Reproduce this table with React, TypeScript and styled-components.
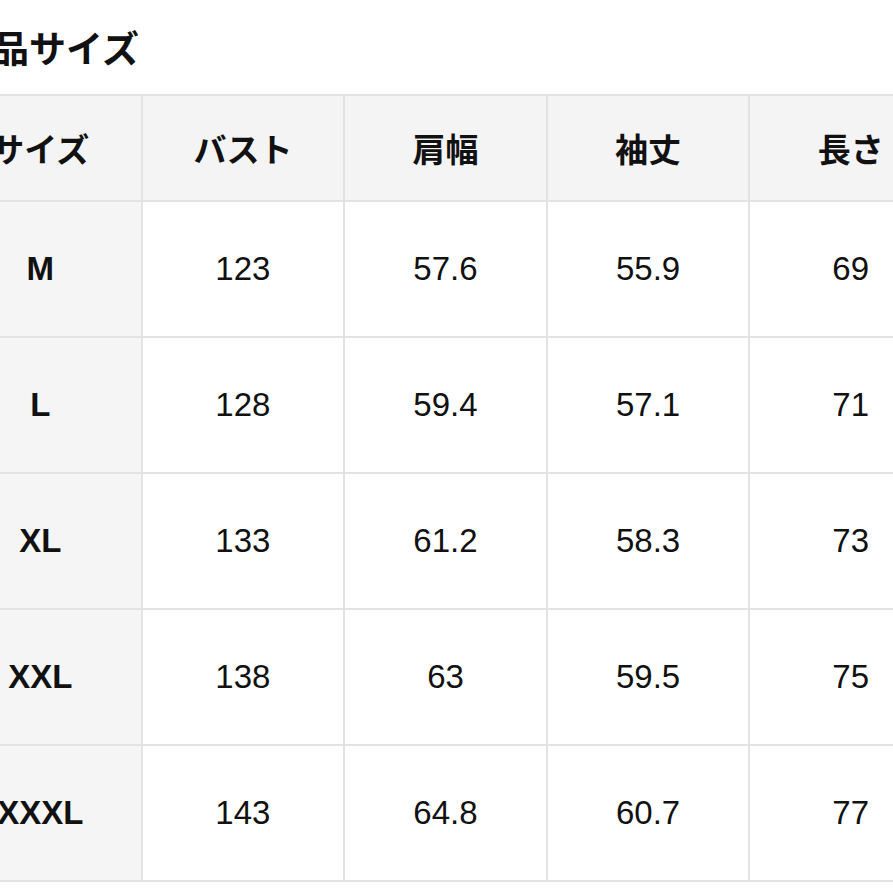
import React from "react";
import styled, { createGlobalStyle } from "styled-components";

const Global = createGlobalStyle`
  html, body { margin: 0; padding: 0; background: #ffffff; overflow: hidden; }
  body { width: 893px; height: 893px; }
`;

const Page = styled.div`
  width: 893px;
  height: 893px;
  overflow: hidden;
  background: #ffffff;
`;

const Title = styled.h2`
  margin: 0 0 0 -45px;
  padding-top: 27px;
  height: 94px;
  box-sizing: border-box;
  font-family: "Noto Sans CJK JP", "Noto Sans", sans-serif;
  font-weight: 700;
  font-size: 37px;
  line-height: 1.1;
  color: #111111;
  white-space: nowrap;
`;

const Table = styled.table`
  margin-left: -62px;
  border-collapse: collapse;
  table-layout: fixed;
  width: 1015px;
`;

const HeadCell = styled.th`
  height: 104px;
  padding: 0;
  background: #f4f4f4;
  border: 2px solid #e3e3e3;
  font-family: "Noto Sans CJK JP", "Noto Sans", sans-serif;
  font-weight: 700;
  font-size: 33px;
  color: #111111;
  text-align: center;
  vertical-align: middle;
`;

const Cell = styled.td<{ $label?: boolean }>`
  height: 134px;
  padding: 0;
  background: ${(p) => (p.$label ? "#f5f5f5" : "#ffffff")};
  border: 2px solid #e3e3e3;
  font-family: "Liberation Sans", Arial, sans-serif;
  font-weight: ${(p) => (p.$label ? 700 : 400)};
  font-size: 33px;
  color: #111111;
  text-align: center;
  vertical-align: middle;
`;

const headers = ["サイズ", "バスト", "肩幅", "袖丈", "長さ"];
const rows: string[][] = [
  ["M", "123", "57.6", "55.9", "69"],
  ["L", "128", "59.4", "57.1", "71"],
  ["XL", "133", "61.2", "58.3", "73"],
  ["XXL", "138", "63", "59.5", "75"],
  ["XXXL", "143", "64.8", "60.7", "77"],
];

export default function App() {
  return (
    <Page>
      <Global />
      <Title>商品サイズ</Title>
      <Table>
        <thead>
          <tr>
            {headers.map((h) => (
              <HeadCell key={h}>{h}</HeadCell>
            ))}
          </tr>
        </thead>
        <tbody>
          {rows.map((r) => (
            <tr key={r[0]}>
              {r.map((v, i) => (
                <Cell key={i} $label={i === 0}>
                  {v}
                </Cell>
              ))}
            </tr>
          ))}
        </tbody>
      </Table>
    </Page>
  );
}
